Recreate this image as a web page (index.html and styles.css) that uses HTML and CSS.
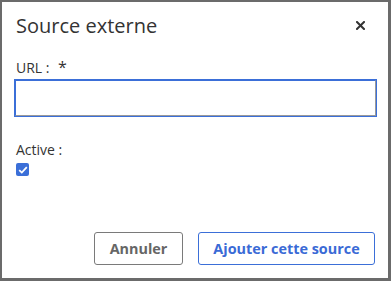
FILE: index.html
```html
<!DOCTYPE html>
<html lang="fr">
<head>
<meta charset="utf-8">
<title>Source externe</title>
<link rel="stylesheet" href="styles.css">
</head>
<body>
<div class="dialog">
  <div class="header">
    <h1 class="title">Source externe</h1>
    <button class="close" aria-label="Fermer">
      <svg width="9" height="9" viewBox="0 0 9 9"><path d="M1 1 L8 8 M8 1 L1 8" stroke="#333" stroke-width="2" stroke-linecap="square"/></svg>
    </button>
  </div>
  <div class="field">
    <label class="label">URL : <span class="req">*</span></label>
    <input class="input" type="text">
  </div>
  <div class="field field-active">
    <label class="label">Active :</label>
    <span class="checkbox">
      <svg width="10" height="8" viewBox="0 0 10 8"><path d="M1.2 4.2 L3.8 6.6 L8.8 1.2" fill="none" stroke="#fff" stroke-width="1.8"/></svg>
    </span>
  </div>
  <div class="actions">
    <button class="btn btn-cancel">Annuler</button>
    <button class="btn btn-primary">Ajouter cette source</button>
  </div>
</div>
</body>
</html>
```

FILE: styles.css
```css
html, body {
  margin: 0;
  padding: 0;
  background: #6b6b6b;
  width: 391px;
  height: 281px;
  overflow: hidden;
}
.dialog {
  box-sizing: border-box;
  margin: 2px;
  width: 386px;
  height: 276px;
  background: #fff;
  padding: 10px 13px 0 14px;
  font-family: "Open Sans", sans-serif;
  color: #333;
  display: flex;
  flex-direction: column;
}
.header {
  display: flex;
  justify-content: space-between;
  align-items: center;
  height: 27px;
}
.title {
  margin: 0;
  font-size: 20px;
  font-weight: 400;
  line-height: 27px;
  color: #333;
}
.close {
  border: 0;
  background: none;
  padding: 0;
  margin-right: 10px;
  width: 9px;
  height: 9px;
  display: flex;
}
.field {
  display: flex;
  flex-direction: column;
  margin-top: 19px;
}
.label {
  font-size: 14px;
  line-height: 19px;
  color: #333;
}
.req {
  margin-left: 5px;
  font-size: 16px;
}
.input {
  box-sizing: border-box;
  margin: 3px 0 0 -1px;
  width: 361px;
  height: 36px;
  border: 1px solid;
  border-color: #3b6fd8 #9a9a9a #9a9a9a #3b6fd8;
  outline: 1px solid #3b6fd8;
  outline-offset: 0;
  background: #fff;
}
.field-active {
  margin-top: 24px;
}
.checkbox {
  margin-top: 4px;
  width: 13px;
  height: 13px;
  border-radius: 2px;
  background: #3b6fd8;
  display: flex;
  align-items: center;
  justify-content: center;
}
.actions {
  margin-top: auto;
  margin-bottom: 13px;
  display: flex;
  justify-content: flex-end;
  gap: 15px;
}
.btn {
  box-sizing: border-box;
  height: 33px;
  background: #fff;
  border-radius: 3px;
  font-family: "Open Sans", sans-serif;
  font-weight: 700;
  font-size: 14.4px;
  padding: 0 10px;
}
.btn-cancel {
  width: 89px;
  border: 1px solid #7a7a7a;
  color: #666;
}
.btn-primary {
  width: 177px;
  border: 1px solid #3b6fd8;
  color: #3a6ad6;
}
```
